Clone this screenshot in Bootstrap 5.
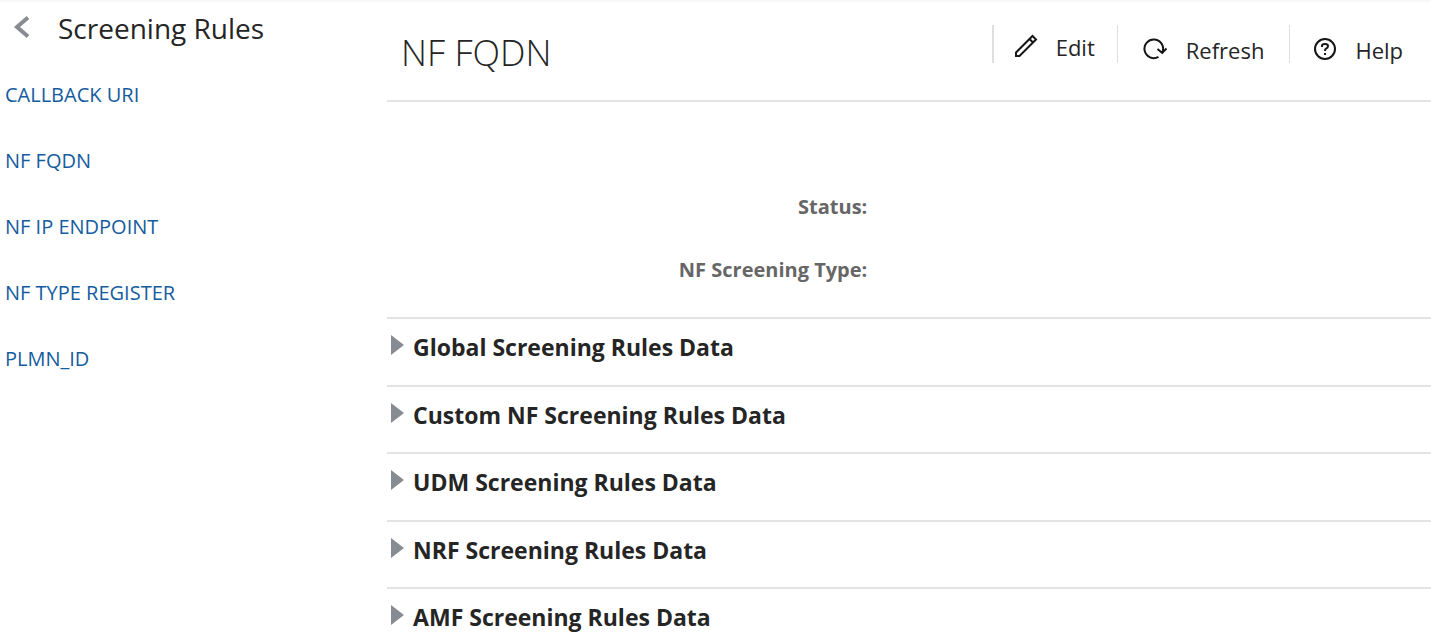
<!DOCTYPE html>
<html lang="en">
<head>
<meta charset="utf-8">
<meta name="viewport" content="width=device-width, initial-scale=1">
<title>Screening Rules</title>
<link href="https://cdn.jsdelivr.net/npm/bootstrap@5.3.0/dist/css/bootstrap.min.css" rel="stylesheet">
<style>
  body { font-family: "Open Sans", "Noto Sans", sans-serif; color: #252525; background: #fff; border-top: 2px solid #f7f7f7; }
  .rules-nav { width: 27.05%; padding-left: 5px; }
  .rules-title { font-size: 28px; line-height: 36px; font-weight: 400; }
  .back-btn { width: 32px; margin-right: 21px; }
  .rules-list { padding-top: 36px; gap: 40px; }
  .rules-link { font-size: 20px; line-height: 26px; color: #145c9e; }
  .page-head { height: 100px; border-bottom: 2px solid #e4e4e4; padding-left: 14px; }
  .page-title { font-size: 36px; line-height: 48px; font-weight: 300; margin-top: 27px; }
  .tools { margin-top: 23px; }
  .tool { border-left: 1px solid #dfdfdf; height: 38px; padding: 9px 25px 0 23px; }
  .tool:first-child { border-left-width: 2px; padding: 6px 22px 0 20px; }
  .tool:last-child { padding-right: 28px; }
  .tool-btn { font-size: 22px; line-height: 32px; color: #252525; gap: 18px; }
  .tool-btn svg { margin-bottom: 3px; }
  .facts { padding: 91px 0 33px; row-gap: 35px; }
  .fact-label { width: 46%; font-size: 20px; line-height: 28px; font-weight: 700; color: #666; }
  .rule-set { border-top: 2px solid #e4e4e4; min-height: 67px; padding: 12px 0 10px 4px; }
  .rule-set:nth-of-type(odd) { min-height: 68px; }
  .rule-set:last-child { min-height: 0; padding-bottom: 0; }
  .rule-set summary { font-size: 23px; line-height: 32px; font-weight: 700; list-style: none; }
  .rule-set .marker { margin: 4px 9px 0 0; }
  .rule-set[open] .marker { transform: rotate(90deg); }
</style>
</head>
<body>
<div class="d-flex">
  <nav class="rules-nav flex-shrink-0" aria-label="Screening rules">
    <div class="d-flex align-items-start pt-2">
      <button type="button" class="btn p-0 border-0 back-btn" aria-label="Back">
        <svg class="d-block" width="32" height="36" viewBox="0 0 32 36" fill="none" stroke="#878c92" stroke-width="4"><path d="M23 7.500 12 17l11 9.500"/></svg>
      </button>
      <h1 class="rules-title mb-0">Screening Rules</h1>
    </div>
    <ul class="list-unstyled d-flex flex-column mb-0 rules-list">
      <li><a class="rules-link d-block text-decoration-none" href="#">CALLBACK URI</a></li>
      <li><a class="rules-link d-block text-decoration-none" href="#">NF FQDN</a></li>
      <li><a class="rules-link d-block text-decoration-none" href="#">NF IP ENDPOINT</a></li>
      <li><a class="rules-link d-block text-decoration-none" href="#">NF TYPE REGISTER</a></li>
      <li><a class="rules-link d-block text-decoration-none" href="#">PLMN_ID</a></li>
    </ul>
  </nav>
  <main class="flex-grow-1">
    <header class="page-head d-flex justify-content-between align-items-start">
      <h2 class="page-title mb-0">NF FQDN</h2>
      <div class="d-flex tools">
        <div class="tool d-flex align-items-start">
          <button type="button" class="btn p-0 border-0 d-flex align-items-center tool-btn">
            <svg width="24" height="24" viewBox="0 0 24 24" fill="none" stroke="#161616" stroke-width="2"><path d="M2 22v-3.500L18.500 2l3.500 3.500L5.500 22zM15.500 5l3.500 3.500"/></svg>Edit
          </button>
        </div>
        <div class="tool d-flex align-items-start">
          <button type="button" class="btn p-0 border-0 d-flex align-items-center tool-btn">
            <svg width="27" height="24" viewBox="0 0 27 24" fill="none" stroke="#161616" stroke-width="2"><path d="M17.500 19.800A9.300 9.300 0 1 1 21.300 15.500M16.500 12l4.700 4 4.300-4.500"/></svg>Refresh
          </button>
        </div>
        <div class="tool d-flex align-items-start">
          <button type="button" class="btn p-0 border-0 d-flex align-items-center tool-btn">
            <svg width="24" height="24" viewBox="0 0 24 24" fill="none" stroke="#161616" stroke-width="2"><circle cx="12" cy="12" r="10"/><path d="M9 10V8.500Q9 7 12 7t3 2-2 2.700q-1 .5-1 2.300M12 16v2"/></svg>Help
          </button>
        </div>
      </div>
    </header>
    <div class="facts d-flex flex-column">
      <div class="fact-label text-end">Status:</div>
      <div class="fact-label text-end">NF Screening Type:</div>
    </div>
    <section>
      <details class="rule-set"><summary class="d-flex align-items-start"><svg class="marker" width="13" height="20" viewBox="0 0 13 20"><path d="M0 0 13 10 0 20z" fill="#878c92"/></svg>Global Screening Rules Data</summary></details>
      <details class="rule-set"><summary class="d-flex align-items-start"><svg class="marker" width="13" height="20" viewBox="0 0 13 20"><path d="M0 0 13 10 0 20z" fill="#878c92"/></svg>Custom NF Screening Rules Data</summary></details>
      <details class="rule-set"><summary class="d-flex align-items-start"><svg class="marker" width="13" height="20" viewBox="0 0 13 20"><path d="M0 0 13 10 0 20z" fill="#878c92"/></svg>UDM Screening Rules Data</summary></details>
      <details class="rule-set"><summary class="d-flex align-items-start"><svg class="marker" width="13" height="20" viewBox="0 0 13 20"><path d="M0 0 13 10 0 20z" fill="#878c92"/></svg>NRF Screening Rules Data</summary></details>
      <details class="rule-set"><summary class="d-flex align-items-start"><svg class="marker" width="13" height="20" viewBox="0 0 13 20"><path d="M0 0 13 10 0 20z" fill="#878c92"/></svg>AMF Screening Rules Data</summary></details>
    </section>
  </main>
</div>
<script src="https://cdn.jsdelivr.net/npm/bootstrap@5.3.0/dist/js/bootstrap.bundle.min.js"></script>
</body>
</html>
